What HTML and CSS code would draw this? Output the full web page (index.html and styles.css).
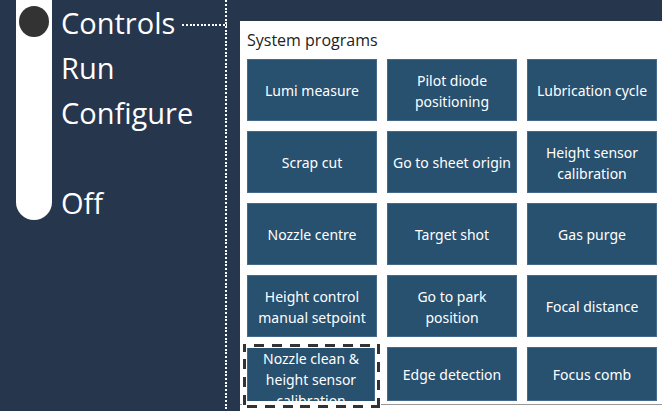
FILE: index.html
```html
<!DOCTYPE html>
<html lang="en">
<head>
<meta charset="utf-8">
<title>System programs</title>
<link rel="stylesheet" href="styles.css">
</head>
<body>
<div class="app">
  <nav class="modes" aria-label="Mode">
    <div class="track"><span class="knob"></span></div>
    <ul class="mode-list">
      <li class="mode active"><a href="#controls">Controls</a></li>
      <li class="mode"><a href="#run">Run</a></li>
      <li class="mode"><a href="#configure">Configure</a></li>
      <li class="mode off"><a href="#off">Off</a></li>
    </ul>
  </nav>
  <main class="panel">
    <h1 class="title">System programs</h1>
    <div class="programs">
      <button type="button">Lumi measure</button>
      <button type="button">Pilot diode positioning</button>
      <button type="button">Lubrication cycle</button>
      <button type="button">Scrap cut</button>
      <button type="button">Go to sheet origin</button>
      <button type="button">Height sensor calibration</button>
      <button type="button">Nozzle centre</button>
      <button type="button">Target shot</button>
      <button type="button">Gas purge</button>
      <button type="button">Height control manual setpoint</button>
      <button type="button">Go to park position</button>
      <button type="button">Focal distance</button>
      <div class="selected">
        <button type="button"><span>Nozzle clean &amp; height sensor calibration</span></button>
        <svg class="marquee" aria-hidden="true">
          <rect class="halo" x="1.500" y="1.500" width="134" height="61"/>
          <path d="M0 1.5H137" stroke-dasharray="3 8 10 8 10 8 10 8 10 7 10 8 10 7 10 7 3 0"/>
          <path d="M0 62.500H137" stroke-dasharray="0 4 10 8 10 8 10 7 10 8 10 8 10 7 10 8 10 0"/>
          <path d="M1.500 0V64" stroke-dasharray="8 7 10 8 10 8 10 12"/>
          <path d="M135.500 0V64" stroke-dasharray="10 8 10 8 10 8 10 0"/>
        </svg>
      </div>
      <button type="button">Edge detection</button>
      <button type="button">Focus comb</button>
    </div>
    <div class="divider"></div>
  </main>
</div>
</body>
</html>
```

FILE: styles.css
```css
* {
  box-sizing: border-box;
}

body {
  margin: 0;
  background: #26364d;
  font-family: "Open Sans", "Noto Sans", sans-serif;
}

.app {
  display: flex;
  min-height: 100vh;
}

.modes {
  display: flex;
  align-items: flex-start;
  gap: 9px;
  flex: 0 0 228px;
  padding-left: 16px;
  padding-right: 1px;
  background: repeating-linear-gradient(#fff 0 2px, #26364d 2px 4px, #fff 4px 6px, #26364d 6px 8px, #fff 8px 10px, #26364d 10px 11px) 225px 0 / 2px 100% no-repeat;
}

.track {
  flex: 0 0 36px;
  height: 220px;
  padding: 6px 3px;
  background: #fff;
  border-radius: 0 0 18px 18px;
}

.knob {
  display: block;
  width: 30px;
  height: 31px;
  border-radius: 50%;
  background: #333;
}

.mode-list {
  flex: 1;
  margin: 0;
  padding: 0;
  list-style: none;
}

.mode {
  display: flex;
  align-items: center;
  gap: 7px;
  font-size: 29px;
  line-height: 45px;
}

.mode a {
  color: #fff;
  text-decoration: none;
}

.mode.off {
  margin-top: 45px;
}

.mode.active::after {
  content: "";
  flex: 1;
  height: 2px;
  margin-top: 5px;
  background: repeating-linear-gradient(90deg, #fff 0 2px, #26364d 2px 4px, #fff 4px 6px, #26364d 6px 8px, #fff 8px 10px, #26364d 10px 11px);
}

.panel {
  flex: 1;
  margin: 21px 0 0 12px;
  padding: 8px 5px 0 7px;
  background: #fff;
}

.title {
  margin: 0 0 8px;
  font-size: 16px;
  font-weight: 400;
  line-height: 22px;
  color: #222;
}

.programs {
  display: grid;
  grid-template-columns: repeat(3, 1fr);
  grid-template-rows: repeat(4, 62px) 54px;
  gap: 10px;
}

button {
  min-width: 0;
  padding: 1px 6px 0;
  border: 1px solid #44698a;
  background: #28506f;
  color: #fff;
  font-family: "Noto Sans", "Open Sans", sans-serif;
  font-size: 14px;
  line-height: 21px;
}

.programs > button:nth-child(3n + 2) {
  padding: 1px 2px 0;
}

.programs > button:nth-child(2) {
  padding: 1px 16px 0;
}

.selected {
  position: relative;
  display: flex;
  padding: 1px 2px 0 0;
}

.selected button {
  display: flex;
  align-items: flex-start;
  justify-content: center;
  flex: 1;
  overflow: hidden;
  padding: 0 12px;
  border-width: 0 1px;
}

.marquee {
  position: absolute;
  top: -3px;
  left: -4px;
  width: 137px;
  height: 64px;
  overflow: visible;
  fill: none;
  stroke: #333;
  stroke-width: 3px;
}

.halo {
  stroke: #fff;
  stroke-width: 5px;
}

.divider {
  margin: 3px -5px 0 -7px;
  border-top: 1px solid #999;
}
```
